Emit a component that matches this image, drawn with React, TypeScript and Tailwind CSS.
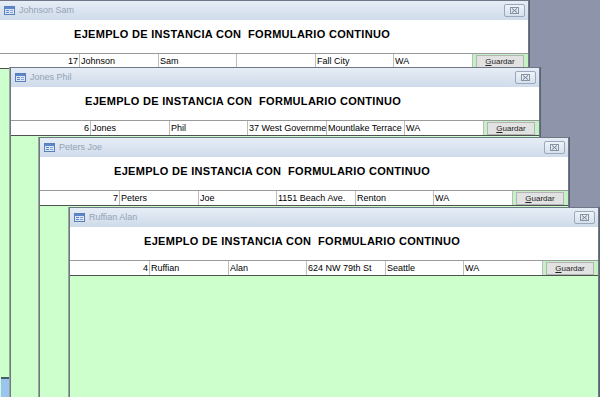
import React from "react";

type FormWindow = {
  left: number;
  top: number;
  title: string;
  id: string;
  cells: string[];
};

const windows: FormWindow[] = [
  { left: -1, top: 0, title: "Johnson Sam", id: "17", cells: ["Johnson", "Sam", "", "Fall City", "WA"] },
  { left: 10, top: 67, title: "Jones Phil", id: "6", cells: ["Jones", "Phil", "37 West Government Way", "Mountlake Terrace", "WA"] },
  { left: 39, top: 137, title: "Peters Joe", id: "7", cells: ["Peters", "Joe", "1151 Beach Ave.", "Renton", "WA"] },
  { left: 69, top: 207, title: "Ruffian Alan", id: "4", cells: ["Ruffian", "Alan", "624 NW 79th St", "Seattle", "WA"] },
];

function FormIcon() {
  return (
    <svg width="11" height="9" viewBox="0 0 11 9">
      <rect x="0.5" y="0.5" width="10" height="8" fill="#dbe6f5" stroke="#5b7fb8" />
      <rect x="1" y="1" width="9" height="2" fill="#5b86c8" />
      <rect x="2" y="4" width="3" height="1" fill="#5b86c8" />
      <rect x="2" y="6" width="3" height="1" fill="#5b86c8" />
      <rect x="6" y="4" width="3" height="1" fill="#8aa6d6" />
      <rect x="6" y="6" width="3" height="1" fill="#8aa6d6" />
    </svg>
  );
}

function CloseButton() {
  return (
    <div className="flex h-[13px] w-[21px] items-center justify-center rounded-[2px] border border-[#9ba8bb] bg-gradient-to-b from-[#eef3f9] to-[#d6e0ec]">
      <svg width="9" height="7" viewBox="0 0 9 7">
        <rect x="0.5" y="0.5" width="8" height="6" fill="none" stroke="#8792a2" />
        <path d="M2 1.5 L7 5.5 M7 1.5 L2 5.5" stroke="#6f7a8a" strokeWidth="1" />
      </svg>
    </div>
  );
}

function Window({ w }: { w: FormWindow }) {
  return (
    <div
      className="absolute flex h-[460px] w-[530px] flex-col border border-[#6f7786] bg-[#ccffcc] shadow-[1px_0_0_#5c6372,-1px_0_0_#98a698]"
      style={{ left: w.left, top: w.top }}
    >
      {/* title bar */}
      <div className="flex h-[19px] shrink-0 items-center bg-gradient-to-b from-[#e6edf6] to-[#cfdbea] pl-[4px] pr-[3px]">
        <FormIcon />
        <span className="ml-[4px] text-[9px] text-[#94a2b6]">{w.title}</span>
        <div className="ml-auto">
          <CloseButton />
        </div>
      </div>

      {/* header */}
      <div className="h-[33px] shrink-0 bg-white pl-[74px] pt-[6px]">
        <h1 className="text-[11px] font-bold tracking-[0.3px] text-black">
          EJEMPLO DE INSTANCIA CON&nbsp; FORMULARIO CONTINUO
        </h1>
      </div>

      {/* record row */}
      <div className="grid h-[16px] shrink-0 grid-cols-[79px_79px_78px_79px_78px_79px_1fr] border-t border-b border-t-[#9a9a9a] border-b-[#4e524e] bg-white text-[9px] leading-[14px] text-black">
        <div className="overflow-hidden whitespace-nowrap pr-[1px] text-right">{w.id}</div>
        {w.cells.map((c, i) => (
          <div key={i} className="overflow-hidden whitespace-nowrap border-l border-[#bdbdbd] pl-[1px]">
            {c}
          </div>
        ))}
        <div className="flex items-start border-l border-[#bdbdbd] bg-[#c4f2c4] pl-[3px] pt-[1px]">
          <button
            type="button"
            className="flex h-[13px] w-[48px] items-center justify-center border border-[#b5b5b5] bg-[#e2e2e2] text-[8px] leading-none text-[#222]"
          >
            <span className="underline">G</span>uardar
          </button>
        </div>
      </div>

      {/* detail area */}
      <div className="flex-1 bg-[#ccffcc]" />
    </div>
  );
}

export default function App() {
  return (
    <div
      className="relative h-[397px] w-[600px] overflow-hidden bg-[#8e94a9]"
      style={{ fontFamily: '"Liberation Sans", Arial, sans-serif' }}
    >
      {windows.map((w, i) => (
        <React.Fragment key={w.title}>
          <Window w={w} />
          {i === 0 && (
            <div className="absolute left-[1px] top-[377px] h-[20px] w-[8px] border-t-2 border-[#4a5a6a] bg-[#9cc4f0]" />
          )}
        </React.Fragment>
      ))}
    </div>
  );
}
